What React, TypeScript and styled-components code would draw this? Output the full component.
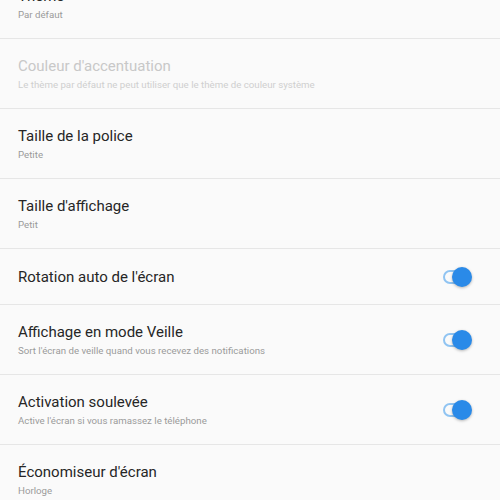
import React, { useState } from "react";
import styled, { createGlobalStyle } from "styled-components";

const Global = createGlobalStyle`
  html, body {
    margin: 0;
    padding: 0;
    background: #fafafa;
    font-family: Roboto, "Noto Sans", sans-serif;
    overflow: hidden;
  }
`

const Screen = styled.div`
  width: 500px;
  height: 500px;
  overflow: hidden;
  background: #fafafa;
`

const List = styled.div`
  display: flex;
  flex-direction: column;
  margin-top: -31px;
`

const Row = styled.div<{ $short?: boolean }>`
  height: ${p => (p.$short ? 55 : 69)}px;
  border-bottom: 1px solid #e6e6e6;
  display: flex;
  align-items: center;
  justify-content: space-between;
  padding: 0 28px 0 18px;
`

const Texts = styled.div`
  display: flex;
  flex-direction: column;
  padding-top: 1px;
`

const Title = styled.div<{ $disabled?: boolean }>`
  font-size: 15px;
  line-height: 19px;
  color: ${p => (p.$disabled ? "#c8c8c8" : "#262626")};
`

const Sub = styled.div<{ $disabled?: boolean }>`
  font-size: 9.7px;
  line-height: 13px;
  margin-top: 2px;
  color: ${p => (p.$disabled ? "#cfcfcf" : "#9a9a9a")};
`

const Track = styled.button`
  position: relative;
  width: 29px;
  height: 20px;
  border: none;
  background: transparent;
  padding: 0;
  cursor: pointer;
  &::before {
    content: "";
    position: absolute;
    left: 0;
    top: 3px;
    width: 26px;
    height: 14px;
    box-sizing: border-box;
    border: 2px solid #90c4f2;
    border-radius: 7px;
  }
`

const Thumb = styled.span<{ $on: boolean }>`
  position: absolute;
  top: 0;
  left: ${p => (p.$on ? 9 : 0)}px;
  width: 20px;
  height: 20px;
  border-radius: 50%;
  background: ${p => (p.$on ? "#2a8ae8" : "#f1f1f1")};
  box-shadow: 0 1px 3px rgba(0, 0, 0, 0.28);
`

const Toggle = ({ initial }: { initial: boolean }) => {
  const [on, setOn] = useState(initial)
  return (
    <Track onClick={() => setOn(!on)}>
      <Thumb $on={on} />
    </Track>
  )
}

type Item = {
  title: string
  sub?: string
  disabled?: boolean
  toggle?: boolean
}

const items: Item[] = [
  { title: "Thème", sub: "Par défaut" },
  { title: "Couleur d'accentuation", sub: "Le thème par défaut ne peut utiliser que le thème de couleur système", disabled: true },
  { title: "Taille de la police", sub: "Petite" },
  { title: "Taille d'affichage", sub: "Petit" },
  { title: "Rotation auto de l'écran", toggle: true },
  { title: "Affichage en mode Veille", sub: "Sort l'écran de veille quand vous recevez des notifications", toggle: true },
  { title: "Activation soulevée", sub: "Active l'écran si vous ramassez le téléphone", toggle: true },
  { title: "Économiseur d'écran", sub: "Horloge" },
]

const App = () => {
  return (
    <Screen>
      <Global />
      <List>
        {items.map(it => (
          <Row key={it.title} $short={!it.sub}>
            <Texts>
              <Title $disabled={it.disabled}>{it.title}</Title>
              {it.sub && <Sub $disabled={it.disabled}>{it.sub}</Sub>}
            </Texts>
            {it.toggle && <Toggle initial={true} />}
          </Row>
        ))}
      </List>
    </Screen>
  )
}

export default App
